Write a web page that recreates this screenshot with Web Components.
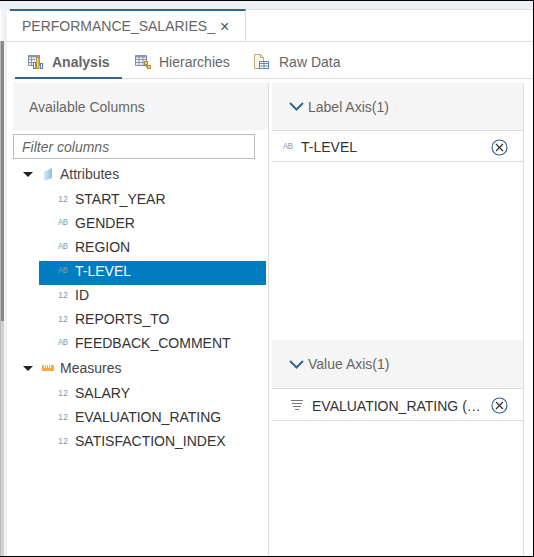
<!DOCTYPE html>
<html>
<head>
<meta charset="utf-8">
<style>
  html, body { margin: 0; padding: 0; background: #fff; }
  body { font: 14px "Liberation Sans", Arial, sans-serif; color: #333; }
</style>
</head>
<body>
<perf-app></perf-app>

<template id="perf-tab-strip-tpl">
  <style>
    :host { display: flex; height: 31px; background: #fff; border-bottom: 1px solid #ddd; border-top: 1px solid #ddd; }
    .tab { margin-left: 3px; width: 236px; box-sizing: border-box; margin-top: -1px; height: 32px; border-top: 2px solid #33658f; border-right: 1px solid #ddd; padding-left: 12px; line-height: 31px; font-size: 14px; color: #666; display: flex; }
    .x { margin-left: 5px; color: #555; font-size: 16px; }
  </style>
  <div class="tab"><span>PERFORMANCE_SALARIES_</span><span class="x">×</span></div>
</template>

<template id="perf-sub-tabs-tpl">
  <style>
    :host { display: flex; height: 36px; margin-left: 6px; padding-left: 2px; border-bottom: 1px solid #ddd; }
    .t { display: flex; align-items: center; color: #666; font-size: 14px; height: 36px; box-sizing: border-box; padding-top: 4px; }
    .t.on { width: 107px; padding-left: 13px; padding-top: 5px; box-sizing: border-box; border-bottom: 2px solid #33658f; font-weight: bold; height: 37px; }
    .t svg { display: block; flex: none; }
    .a svg { margin-right: 8px; }
    .h { margin-left: 13px; width: 118px; }
    .h svg { margin-right: 8px; }
    .r svg { margin-right: 10px; }
  </style>
  <div class="t on a">
    <svg width="16" height="16" viewBox="0 0 16 16">
      <path d="M.5 1.5h11v10H.5z" fill="#eef2f8" stroke="#7d8aa0"/>
      <path d="M.5 1.5h11v2H.5z" fill="#8c98ad"/>
      <path d="M.5 5.5h7M.5 8.5h7M3.5 1.5v10" stroke="#8c98ad"/>
      <rect x="5.5" y="8.5" width="2" height="6" fill="#fff" stroke="#5f7fa8"/>
      <rect x="8.5" y="3.5" width="2.5" height="11" fill="#f3d27a" stroke="#b8902c"/>
      <rect x="12.5" y="9.5" width="2" height="5" fill="#fff" stroke="#5f7fa8"/>
    </svg>
    <span>Analysis</span>
  </div>
  <div class="t h">
    <svg width="16" height="16" viewBox="0 0 16 16">
      <path d="M.5 1.5h11v10H.5z" fill="#eef2f8" stroke="#7d8aa0"/>
      <path d="M.5 1.5h11v2H.5z" fill="#8c98ad"/>
      <path d="M.5 5.5h11M.5 8.5h11M4 1.5v10M8 1.5v10" stroke="#8c98ad"/>
      <rect x="9.5" y="7.5" width="3" height="3" fill="#f3d27a" stroke="#b08a2c"/>
      <rect x="12.5" y="11.5" width="3" height="3" fill="#f3d27a" stroke="#b08a2c"/>
      <path d="M11 10.5v2.500h1.500" fill="none" stroke="#b08a2c"/>
    </svg>
    <span>Hierarchies</span>
  </div>
  <div class="t r">
    <svg width="16" height="16" viewBox="0 0 16 16">
      <path d="M1.500 .5h6l3 3v11h-9z" fill="#fbf6e8" stroke="#bca878"/>
      <path d="M7.500 .5v3h3" fill="none" stroke="#bca878"/>
      <rect x="6.500" y="7.500" width="9" height="7" fill="#fff" stroke="#5f86b8"/>
      <path d="M6.500 9.500h9M6.500 12h9M11 7.500v7" stroke="#5f86b8"/>
    </svg>
    <span>Raw Data</span>
  </div>
</template>

<template id="perf-tree-row-tpl">
  <style>
    :host { display: block; height: 24px; }
    .row { height: 20px; padding-bottom: 4px; margin-left: 26px; width: 227px; display: flex; align-items: center; color: #333; font-size: 14px; }
    :host([selected]) .row { background: #007cc0; color: #fff; }
    .k { width: 36px; box-sizing: border-box; padding-left: 19px; font: 8.500px "Liberation Mono", monospace; color: #7f9db3; flex: none; letter-spacing: -.3px; }
    :host([k="12"]) .k { font: 9px "Liberation Sans", sans-serif; letter-spacing: 0; }
  </style>
  <div class="row"><span class="k"></span><span><slot></slot></span></div>
</template>

<template id="perf-tree-group-tpl">
  <style>
    :host { display: block; }
    .head { height: 22px; padding-bottom: 4px; display: flex; align-items: center; color: #444; font-size: 14px; }
    .caret { width: 0; height: 0; margin-left: 10px; border: 5px solid transparent; border-top: 5px solid #222; border-bottom: 0; flex: none; }
    .ico { width: 8px; height: 13px; margin-left: 11px; margin-right: 8px; flex: none; display: block; }
    :host([kind=measure]) .ico { margin-left: 9px; margin-right: 6px; width: 12px; height: 6px; }
  </style>
  <div class="head"><span class="caret"></span><span class="slot-ico"></span><slot name="label"></slot></div>
  <slot></slot>
</template>

<template id="perf-columns-tpl">
  <style>
    :host { display: flex; flex-direction: column; width: 256px; flex: none; box-sizing: border-box; border-right: 1px solid #ddd; margin-top: 4px; }
    .head { height: 47px; background: #f5f5f5; line-height: 49px; color: #666; font-size: 14px; padding-left: 16px; }
    .filter { display: block; margin-top: 4px; width: 242px; height: 25px; box-sizing: border-box; border: 1px solid #bbb; padding-left: 8px; font-size: 14px; font-style: italic; line-height: 24px; color: #666; }
    .tree { margin-top: 4px; }
  </style>
  <div class="head">Available Columns</div>
  <div class="filter">Filter columns</div>
  <div class="tree"><slot></slot></div>
</template>

<template id="perf-axis-tpl">
  <style>
    :host { display: block; }
    .head { height: 47px; background: #f5f5f5; border-bottom: 1px solid #ddd; display: flex; align-items: center; color: #666; font-size: 14px; padding-left: 17px; }
    :host([tall]) .head { height: 48px; }
    svg { margin-right: 4px; display: block; }
  </style>
  <div class="head">
    <svg width="15" height="9" viewBox="0 0 15 9"><path d="M1 1l6.500 6.500L14 1" fill="none" stroke="#33658f" stroke-width="2"/></svg>
    <span class="t"></span>
  </div>
  <slot></slot>
</template>

<template id="perf-axis-row-tpl">
  <style>
    :host { display: flex; align-items: center; height: 28px; padding-top: 2px; border-bottom: 1px solid #ddd; font-size: 14px; color: #333; }
    :host([sorted]) { height: 29px; }
    .k { width: 29px; box-sizing: border-box; padding-left: 11px; font: 8.500px "Liberation Mono", monospace; color: #7f9db3; flex: none; letter-spacing: -.3px; }
    :host([sorted]) .k { width: 40px; padding-left: 19px; }
    .k svg { display: block; }
    .name { flex: 1; white-space: nowrap; }
    .rm { margin-right: 15px; display: block; flex: none; }
  </style>
  <span class="k"></span>
  <span class="name"><slot></slot></span>
  <svg class="rm" width="17" height="17" viewBox="0 0 17 17"><circle cx="8.500" cy="8.500" r="7.500" fill="none" stroke="#2f5f8f" stroke-width="1.100"/><path d="M5 5l7 7M12 5l-7 7" stroke="#333" stroke-width="1.200"/></svg>
</template>

<template id="perf-app-tpl">
  <style>
    :host { display: block; width: 534px; height: 557px; box-sizing: border-box; border: 1px solid #000; border-left: 0; background: #fff; overflow: hidden; }
    .wrap { display: flex; height: 100%; }
    .rail { width: 7px; flex: none; display: flex; }
    .rail i { display: block; }
    .rail .a { width: 1px; background: linear-gradient(#fff 0 40px, #bbb 40px); }
    .rail .b { width: 3px; background: linear-gradient(#f4f4f4 0 40px, #888 40px 320px, #d0d0d0 320px); }
    .rail .c { width: 3px; background: #eef1f6; }
    .main { flex: 1; min-width: 0; display: flex; flex-direction: column; }
    .band { height: 8px; background: #eef1f6; flex: none; margin-left: -7px; }
    .body { flex: 1; display: flex; min-height: 0; margin-left: 6px; }
    .right { width: 252px; margin-left: 3px; margin-top: 4px; border-right: 1px solid #ddd; display: flex; flex-direction: column; box-sizing: border-box; }
    .spacer { height: 178px; flex: none; }
  </style>
  <div class="wrap">
    <div class="rail"><i class="a"></i><i class="b"></i><i class="c"></i></div>
    <div class="main">
      <div class="band"></div>
      <perf-tab-strip></perf-tab-strip>
      <perf-sub-tabs></perf-sub-tabs>
      <div class="body">
        <perf-columns>
          <perf-tree-group kind="attribute">
            <span slot="label">Attributes</span>
            <perf-tree-row k="12">START_YEAR</perf-tree-row>
            <perf-tree-row k="AB">GENDER</perf-tree-row>
            <perf-tree-row k="AB">REGION</perf-tree-row>
            <perf-tree-row k="AB" selected>T-LEVEL</perf-tree-row>
            <perf-tree-row k="12">ID</perf-tree-row>
            <perf-tree-row k="12">REPORTS_TO</perf-tree-row>
            <perf-tree-row k="AB">FEEDBACK_COMMENT</perf-tree-row>
          </perf-tree-group>
          <perf-tree-group kind="measure">
            <span slot="label">Measures</span>
            <perf-tree-row k="12">SALARY</perf-tree-row>
            <perf-tree-row k="12">EVALUATION_RATING</perf-tree-row>
            <perf-tree-row k="12">SATISFACTION_INDEX</perf-tree-row>
          </perf-tree-group>
        </perf-columns>
        <div class="right">
          <perf-axis title-text="Label Axis(1)"><perf-axis-row k="AB">T-LEVEL</perf-axis-row></perf-axis>
          <div class="spacer"></div>
          <perf-axis title-text="Value Axis(1)" tall><perf-axis-row sorted>EVALUATION_RATING (…</perf-axis-row></perf-axis>
        </div>
      </div>
    </div>
  </div>
</template>

<script>
  const stamp = (el, id) => {
    const shdw = el.attachShadow({mode: 'open'});
    shdw.appendChild(document.getElementById(id).content.cloneNode(true));
    return shdw;
  };

  class PerfTabStrip extends HTMLElement {
    constructor() { super(); stamp(this, 'perf-tab-strip-tpl'); }
  }
  class PerfSubTabs extends HTMLElement {
    constructor() { super(); stamp(this, 'perf-sub-tabs-tpl'); }
  }
  class PerfTreeRow extends HTMLElement {
    constructor() { super(); stamp(this, 'perf-tree-row-tpl'); }
    connectedCallback() {
      this.shadowRoot.querySelector('.k').textContent = this.getAttribute('k') || '';
    }
  }
  const GROUP_ICONS = {
    attribute: '<svg class="ico" viewBox="0 0 8 13"><defs><linearGradient id="g" x1="0" x2="1"><stop offset="0" stop-color="#dbe9f7"/><stop offset="1" stop-color="#8fbbe3"/></linearGradient></defs><path d="M0 4l8-4v10l-8 3z" fill="url(#g)"/></svg>',
    measure: '<svg class="ico" viewBox="0 0 12 6"><rect width="12" height="6" fill="#f8ab45"/><path d="M2.500 0v3M4.500 0v3M6.500 0v3M8.500 0v3" stroke="#fff"/></svg>'
  };
  class PerfTreeGroup extends HTMLElement {
    constructor() { super(); stamp(this, 'perf-tree-group-tpl'); }
    connectedCallback() {
      this.shadowRoot.querySelector('.slot-ico').outerHTML = GROUP_ICONS[this.getAttribute('kind')];
    }
  }
  class PerfColumns extends HTMLElement {
    constructor() { super(); stamp(this, 'perf-columns-tpl'); }
  }
  class PerfAxis extends HTMLElement {
    constructor() { super(); stamp(this, 'perf-axis-tpl'); }
    connectedCallback() {
      this.shadowRoot.querySelector('.t').textContent = this.getAttribute('title-text');
    }
  }
  class PerfAxisRow extends HTMLElement {
    constructor() { super(); stamp(this, 'perf-axis-row-tpl'); }
    connectedCallback() {
      const k = this.shadowRoot.querySelector('.k');
      if (this.hasAttribute('sorted')) {
        k.innerHTML = '<svg width="12" height="11" viewBox="0 0 12 11"><path d="M0 .5h12M1 3.500h10M2 6.500h8M4 9.500h4" stroke="#777" fill="none"/></svg>';
      } else {
        k.textContent = this.getAttribute('k') || '';
      }
    }
  }
  class PerfApp extends HTMLElement {
    constructor() { super(); stamp(this, 'perf-app-tpl'); }
  }

  customElements.define('perf-tab-strip', PerfTabStrip);
  customElements.define('perf-sub-tabs', PerfSubTabs);
  customElements.define('perf-tree-row', PerfTreeRow);
  customElements.define('perf-tree-group', PerfTreeGroup);
  customElements.define('perf-columns', PerfColumns);
  customElements.define('perf-axis', PerfAxis);
  customElements.define('perf-axis-row', PerfAxisRow);
  customElements.define('perf-app', PerfApp);
</script>
</body>
</html>
